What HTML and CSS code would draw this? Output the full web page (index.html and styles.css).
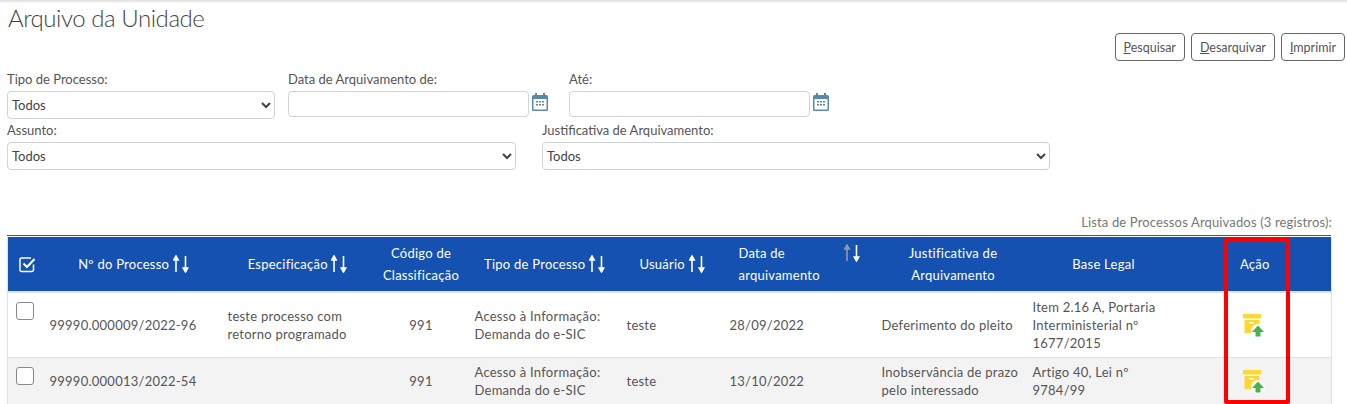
FILE: index.html
```html
<!DOCTYPE html>
<html>
<head>
  <title>Arquivo da Unidade</title>
  <meta charset="utf-8">
  <link rel="stylesheet" href="styles.css">
</head>
<body>
  <svg class="defs" width="0" height="0">
    <symbol id="sort" viewBox="0 0 16 18">
      <path d="M3 17V2M.8 5 3 1l2.2 4z" stroke="currentColor" stroke-width="1.6" fill="currentColor"/>
      <path d="M12.500 1v15M10.300 13l2.200 4 2.200-4z" stroke="#fff" stroke-width="1.6" fill="#fff"/>
    </symbol>
    <symbol id="cal" viewBox="0 0 16 19">
      <path d="M1.500 3H3V1h2v2h6V1h2v2h1.500A1.500 1.500 0 0 1 16 4.500v13a1.500 1.500 0 0 1-1.500 1.500h-13A1.500 1.500 0 0 1 0 17.500v-13A1.500 1.500 0 0 1 1.500 3z" fill="#5a88ad"/>
      <rect x="1.500" y="7" width="13" height="10.500" fill="#fff"/>
      <path d="M4 9h2v1.500H4zM7 9h2v1.500H7zM10 9h2v1.500h-2zM4 12h2v1.500H4zM7 12h2v1.500H7zM10 12h2v1.500h-2z" fill="#5a88ad"/>
    </symbol>
    <symbol id="unarchive" viewBox="0 0 22 23">
      <rect x="0" y="0" width="18" height="4.500" fill="#fdd835"/>
      <path d="M1.500 6h15v13h-15z" fill="#fdd835"/>
      <rect x="6" y="8" width="5" height="1.600" fill="#fff"/>
      <circle cx="15" cy="17" r="7" fill="#fff"/>
      <path d="M15 11.500 21 18h-3.500v4.500h-5V18H9z" fill="#4caf50"/>
    </symbol>
  </svg>

  <div class="topbar"></div>
  <main class="page">
    <header class="page-head">
      <h1>Arquivo da Unidade</h1>
      <div class="actions">
        <button class="btn"><u>P</u>esquisar</button>
        <button class="btn"><u>D</u>esarquivar</button>
        <button class="btn"><u>I</u>mprimir</button>
      </div>
    </header>

    <form class="filters">
      <div class="filter-row">
        <div class="field field-tipo">
          <label>Tipo de Processo:</label>
          <select><option>Todos</option></select>
        </div>
        <div class="field field-date">
          <label>Data de Arquivamento de:</label>
          <div class="date-wrap">
            <input type="text">
            <svg class="cal"><use href="#cal"/></svg>
          </div>
        </div>
        <div class="field field-date">
          <label>Até:</label>
          <div class="date-wrap">
            <input type="text">
            <svg class="cal"><use href="#cal"/></svg>
          </div>
        </div>
      </div>
      <div class="filter-row filter-row-2">
        <div class="field field-assunto">
          <label>Assunto:</label>
          <select><option>Todos</option></select>
        </div>
        <div class="field field-just">
          <label>Justificativa de Arquivamento:</label>
          <select><option>Todos</option></select>
        </div>
      </div>
    </form>

    <p class="caption">Lista de Processos Arquivados (3 registros):</p>

    <div class="table-wrap">
      <table class="processos">
        <colgroup>
          <col class="c-check"><col class="c-num"><col class="c-spec"><col class="c-cod"><col class="c-tipo">
          <col class="c-user"><col class="c-data"><col class="c-just"><col class="c-base"><col class="c-acao">
        </colgroup>
        <thead>
          <tr>
            <th>
              <svg class="check-all" viewBox="0 0 17 17" fill="none" stroke="#fff">
                <path d="M14.500 8.500v5.500a1.500 1.500 0 0 1-1.500 1.500H2.500A1.500 1.500 0 0 1 1 14V3.500A1.500 1.500 0 0 1 2.500 2H12" stroke-width="1.500"/>
                <path d="M4.500 7.500 8 11l7.500-8" stroke-width="2"/>
              </svg>
            </th>
            <th class="th-num">Nº do Processo <svg class="sort"><use href="#sort"/></svg></th>
            <th>Especificação <svg class="sort"><use href="#sort"/></svg></th>
            <th>Código de<br>Classificação</th>
            <th class="th-tipo">Tipo de Processo <svg class="sort"><use href="#sort"/></svg></th>
            <th class="th-tipo">Usuário <svg class="sort"><use href="#sort"/></svg></th>
            <th class="th-data">
              <span class="th-data-text">Data de<br>arquivamento</span>
              <svg class="sort sort-active"><use href="#sort"/></svg>
            </th>
            <th class="th-just">Justificativa de<br>Arquivamento</th>
            <th>Base Legal</th>
            <th class="th-acao">Ação</th>
          </tr>
        </thead>
        <tbody>
          <tr>
            <td class="td-check"><input type="checkbox" class="check"></td>
            <td>99990.000009/2022-96</td>
            <td>teste processo com<br>retorno programado</td>
            <td class="center">991</td>
            <td>Acesso à Informação:<br>Demanda do e-SIC</td>
            <td>teste</td>
            <td>28/09/2022</td>
            <td>Deferimento do pleito</td>
            <td>Item 2.16 A, Portaria<br>Interministerial nº<br>1677/2015</td>
            <td class="td-acao"><svg class="unarchive"><use href="#unarchive"/></svg></td>
          </tr>
          <tr class="alt">
            <td class="td-check"><input type="checkbox" class="check"></td>
            <td>99990.000013/2022-54</td>
            <td></td>
            <td class="center">991</td>
            <td>Acesso à Informação:<br>Demanda do e-SIC</td>
            <td>teste</td>
            <td>13/10/2022</td>
            <td>Inobservância de prazo<br>pelo interessado</td>
            <td>Artigo 40, Lei nº<br>9784/99</td>
            <td class="td-acao"><svg class="unarchive"><use href="#unarchive"/></svg></td>
          </tr>
        </tbody>
      </table>
      <div class="highlight"></div>
    </div>
  </main>
</body>
</html>
```

FILE: styles.css
```css
html, body {
  height: 404px;
  overflow: hidden;
}

body {
  margin: 0;
  background: #fff;
  font-family: Lato, "Open Sans", sans-serif;
  font-size: 13px;
  color: #555;
}

.defs {
  position: absolute;
}

.topbar {
  height: 3px;
  background: linear-gradient(#ddd, #fafafa);
}

.page {
  padding: 0 2px 0 7px;
}

.page-head {
  display: flex;
  justify-content: space-between;
  height: 58px;
}

.page-head h1 {
  margin: 1px 0 0 1px;
  font-size: 24px;
  font-weight: 300;
  line-height: 28px;
  letter-spacing: -0.45px;
  color: #444;
}

.actions {
  display: flex;
  gap: 6px;
  align-items: flex-end;
}

.btn {
  height: 28px;
  padding: 0 8px;
  background: #fff;
  border: 1px solid #666;
  border-radius: 4px;
  font: inherit;
  font-size: 12.5px;
  color: #555;
}

.filter-row {
  display: flex;
  margin-top: 9px;
}

.filter-row-2 {
  margin-top: 2px;
  gap: 26px;
}

.field label {
  display: block;
  height: 21px;
  line-height: 18px;
}

.field select {
  display: block;
  width: 100%;
  height: 28px;
  padding: 0;
  background: #fff;
  border: 1px solid #ced4da;
  border-radius: 4px;
  font: inherit;
  color: #444;
}

.field-tipo {
  width: 268px;
  margin-right: 13px;
}

.field-date {
  width: 281px;
}

.field-assunto {
  width: 509px;
}

.field-just {
  width: 508px;
}

.date-wrap {
  display: flex;
  align-items: flex-start;
  gap: 3px;
}

.date-wrap input {
  box-sizing: border-box;
  width: 241px;
  height: 26px;
  background: #fff;
  border: 1px solid #ced4da;
  border-radius: 4px;
}

.cal {
  width: 16px;
  height: 19px;
  margin-top: 1px;
}

.caption {
  margin: 43px 0 4px;
  width: 1325px;
  text-align: right;
  line-height: 18px;
  letter-spacing: 0.15px;
  color: #777;
}

.table-wrap {
  position: relative;
  width: 1324px;
  border-top: 1px solid #4d5f2e;
}

.processos {
  width: 100%;
  table-layout: fixed;
  border-collapse: collapse;
  border: 1px solid #dee2e6;
  border-top: 0;
  letter-spacing: 0.25px;
}

.c-check { width: 34px; }
.c-num { width: 178px; }
.c-spec { width: 156px; }
.c-cod { width: 91px; }
.c-tipo { width: 152px; }
.c-user { width: 103px; }
.c-data { width: 152px; }
.c-just { width: 151px; }
.c-base { width: 158px; }
.c-acao { width: 149px; }

.processos thead tr {
  height: 55px;
  background: #1551b1;
  border-top: 1px solid #fff;
  border-bottom: 2px solid #dee2e6;
}

.processos th {
  padding: 5px 0;
  font-weight: 400;
  line-height: 22px;
  color: #fff;
  text-align: center;
}

.processos td {
  padding: 5px 8px;
  line-height: 18px;
  vertical-align: middle;
  white-space: nowrap;
}

.processos tbody tr {
  border-bottom: 1px solid #dee2e6;
}

.processos tbody tr.alt {
  background: #f3f3f4;
}

.processos td.center {
  text-align: center;
}

.processos td.td-check {
  padding: 9px 0 0 8px;
  vertical-align: top;
}

.processos td.td-acao {
  padding: 0 0 0 60px;
}

.processos th.th-num {
  padding-left: 6px;
}

.processos th.th-tipo {
  padding-left: 4px;
}

.processos th.th-just {
  padding-left: 8px;
}

.processos th.th-acao {
  padding-right: 4px;
}

.check {
  appearance: none;
  display: block;
  width: 18px;
  height: 18px;
  margin: 0;
  background: #fff;
  border: 1px solid #888;
  border-radius: 3px;
}

.check-all {
  display: block;
  width: 17px;
  height: 17px;
  margin-left: 11px;
}

.sort {
  width: 16px;
  height: 18px;
  color: #fff;
  vertical-align: -4px;
}

.processos th.th-data {
  padding-left: 17px;
  text-align: left;
  white-space: nowrap;
}

.th-data-text {
  display: inline-block;
  width: 102px;
}

.sort-active {
  color: #8e9aa8;
  vertical-align: 18px;
}

.unarchive {
  display: block;
  width: 22px;
  height: 23px;
}

.highlight {
  position: absolute;
  left: 1217px;
  top: 2px;
  width: 58px;
  height: 158px;
  border: 4px solid #f00;
  border-radius: 2px;
}
```
